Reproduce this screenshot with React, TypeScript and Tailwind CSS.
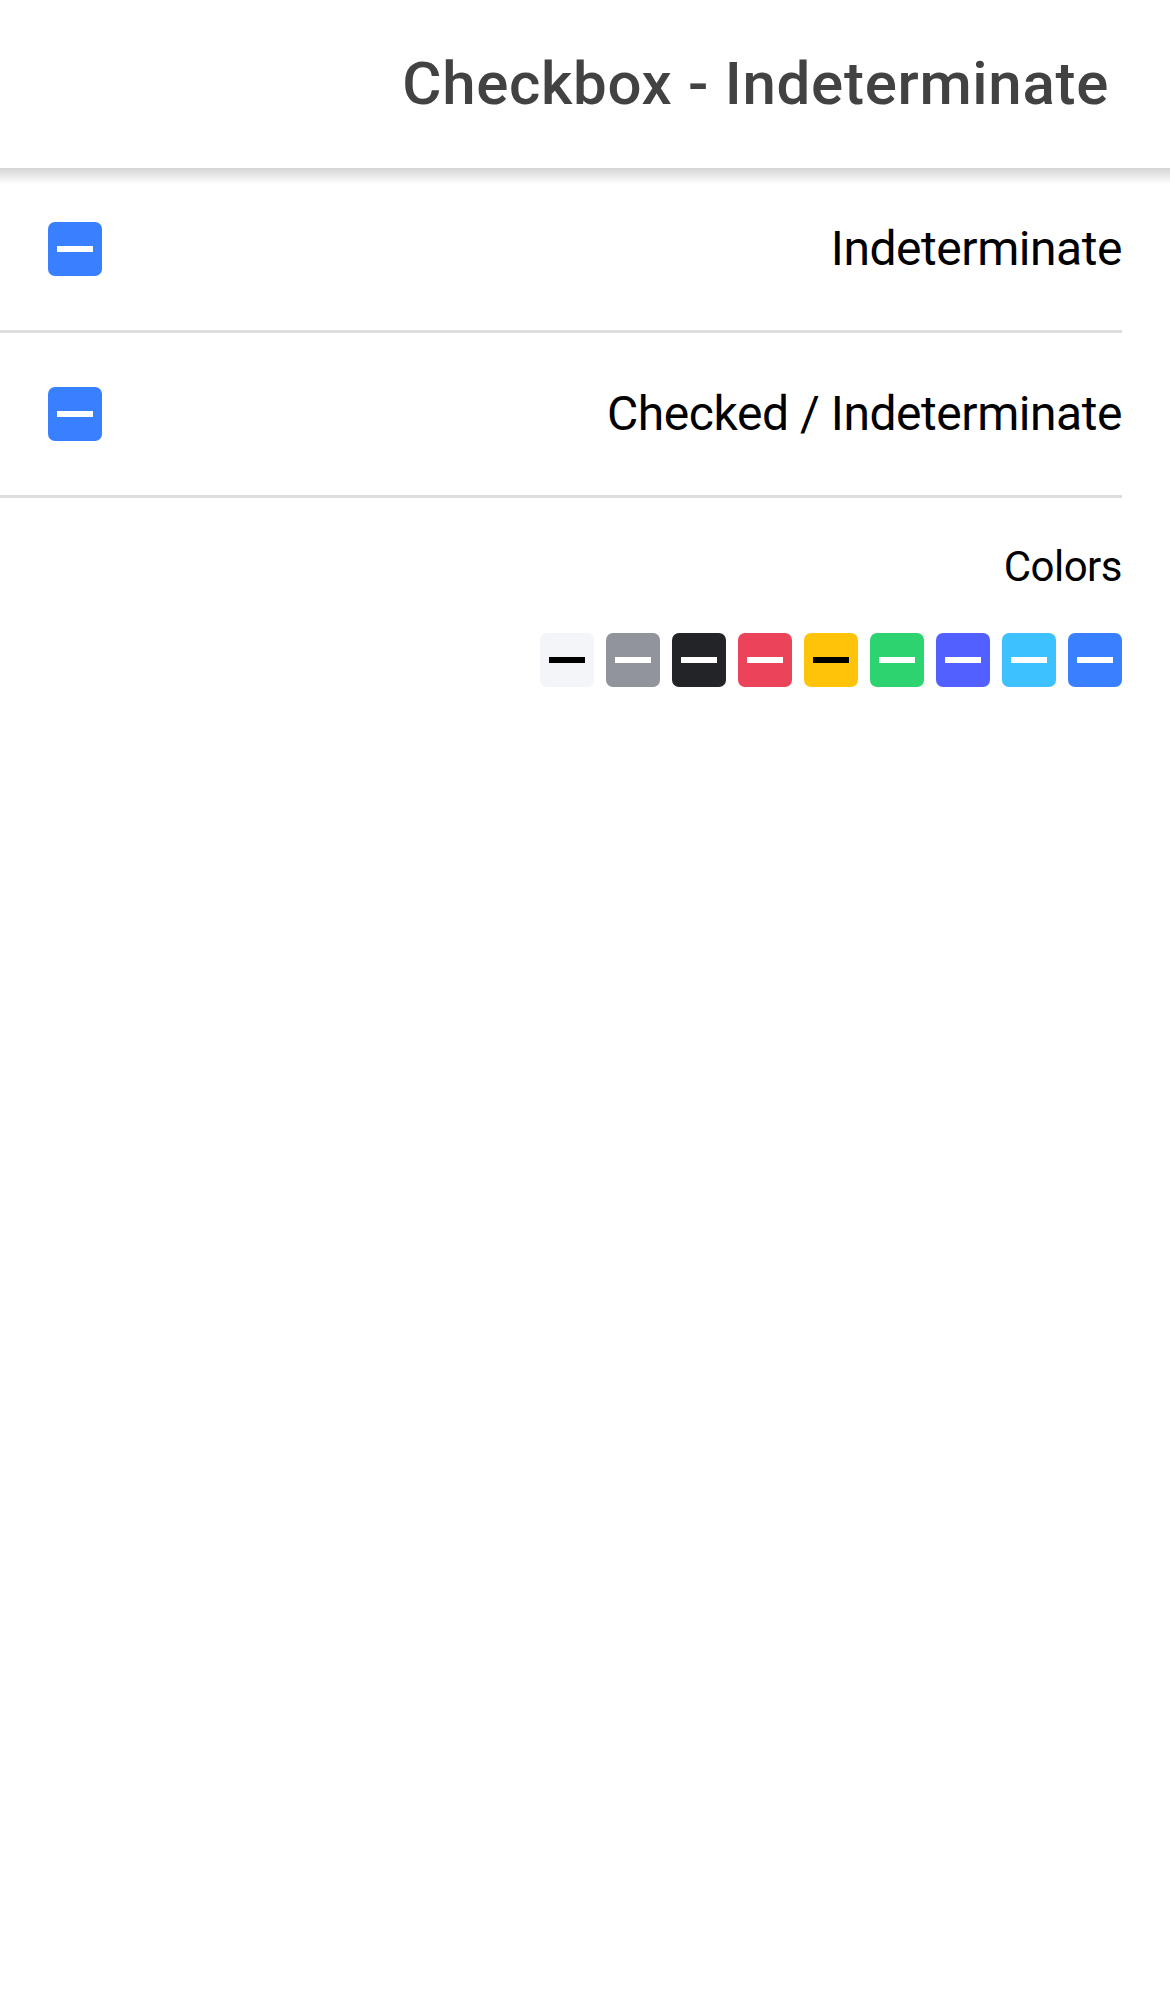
import React from 'react';

const swatches = [
  { bg: 'bg-[#f4f5f8]', bar: 'bg-black' },
  { bg: 'bg-[#92949c]', bar: 'bg-white' },
  { bg: 'bg-[#222428]', bar: 'bg-white' },
  { bg: 'bg-[#eb445a]', bar: 'bg-white' },
  { bg: 'bg-[#ffc409]', bar: 'bg-black' },
  { bg: 'bg-[#2dd36f]', bar: 'bg-white' },
  { bg: 'bg-[#5260ff]', bar: 'bg-white' },
  { bg: 'bg-[#3dc2ff]', bar: 'bg-white' },
  { bg: 'bg-[#3880ff]', bar: 'bg-white' },
];

const Indeterminate: React.FC<{ bg?: string; bar?: string }> = ({ bg = 'bg-[#3880ff]', bar = 'bg-white' }) => (
  <div className={`w-[54px] h-[54px] rounded-[7px] ${bg} flex items-center justify-center shrink-0`}>
    <div className={`w-[36px] h-[6px] ${bar}`} />
  </div>
);

const Row: React.FC<{ label: string }> = ({ label }) => (
  <div className="pr-[48px]">
    <div className="h-[165px] pl-[48px] flex items-center justify-between border-b-[3px] border-[#dedede]">
      <Indeterminate />
      <span className="text-[48px] leading-[56px] text-black tracking-[-0.45px]">{label}</span>
    </div>
  </div>
);

export default function App() {
  return (
    <div className="w-[1170px] min-h-[1992px] bg-white font-['Roboto',sans-serif]">
      <header className="relative h-[168px] bg-white flex items-center justify-end pr-[61px] z-10">
        <h1 className="text-[60px] leading-[70px] font-medium text-[#424242] tracking-[0.7px]">
          Checkbox - Indeterminate
        </h1>
        <div className="absolute left-0 right-0 top-full h-[16px] bg-gradient-to-b from-black/[0.17] to-transparent" />
      </header>

      <Row label="Indeterminate" />
      <Row label="Checked / Indeterminate" />

      <div className="pt-[44px] pr-[48px] flex flex-col items-end">
        <p className="text-[42px] leading-[50px] text-black tracking-[-0.5px]">Colors</p>
        <div className="mt-[41px] flex gap-[12px]">
          {swatches.map((s, i) => (
            <Indeterminate key={i} bg={s.bg} bar={s.bar} />
          ))}
        </div>
      </div>
    </div>
  );
}
